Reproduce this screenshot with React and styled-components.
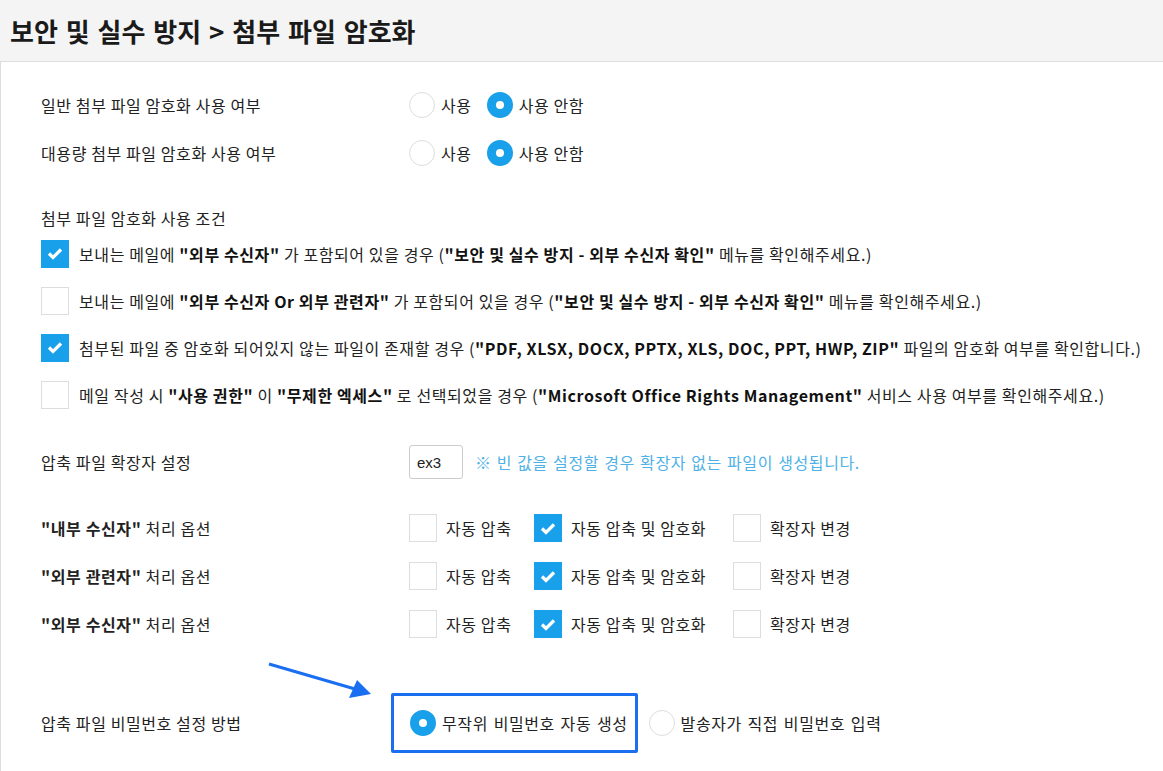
import React from "react";
import styled, { createGlobalStyle } from "styled-components";

const GlobalStyle = createGlobalStyle`
  html, body {
    margin: 0;
    padding: 0;
    background: #ffffff;
  }
  body {
    font-family: "Noto Sans CJK KR", "Noto Sans", sans-serif;
    color: #222222;
  }
`;

const CheckIcon = () => (
    <svg width="16" height="13" viewBox="0 0 16 13">
        <path d="M2 6.5 L6 10.5 L14 2.5" fill="none" stroke="#ffffff" strokeWidth="3.2" />
    </svg>
);

const Radio = ({ checked, label }) => (
    <RadioLabel>
        <RadioCircle checked={checked} />
        <span>{label}</span>
    </RadioLabel>
);

const Check = ({ checked, label }) => (
    <CheckLabel>
        <CheckBox checked={checked}>{checked && <CheckIcon />}</CheckBox>
        <span>{label}</span>
    </CheckLabel>
);

const conditions = [
    {
        checked: true,
        text: (
            <>
                보내는 메일에 <b>"외부 수신자"</b> 가 포함되어 있을 경우 (<b>"보안 및 실수 방지 - 외부 수신자 확인"</b> 메뉴를 확인해주세요.)
            </>
        ),
    },
    {
        checked: false,
        text: (
            <>
                보내는 메일에 <b>"외부 수신자 Or 외부 관련자"</b> 가 포함되어 있을 경우 (<b>"보안 및 실수 방지 - 외부 수신자 확인"</b> 메뉴를 확인해주세요.)
            </>
        ),
    },
    {
        checked: true,
        text: (
            <>
                첨부된 파일 중 암호화 되어있지 않는 파일이 존재할 경우 (<b>"PDF, XLSX, DOCX, PPTX, XLS, DOC, PPT, HWP, ZIP"</b> 파일의 암호화 여부를 확인합니다.)
            </>
        ),
    },
    {
        checked: false,
        text: (
            <>
                메일 작성 시 <b>"사용 권한"</b> 이 <b>"무제한 엑세스"</b> 로 선택되었을 경우 (<b>"Microsoft Office Rights Management"</b> 서비스 사용 여부를 확인해주세요.)
            </>
        ),
    },
];

const targets = ["내부 수신자", "외부 관련자", "외부 수신자"];

const App = () => {
    return (
        <Page>
            <GlobalStyle />
            <Header>
                <Title>보안 및 실수 방지 &gt; 첨부 파일 암호화</Title>
            </Header>
            <Panel>
                <Row>
                    <Label>일반 첨부 파일 암호화 사용 여부</Label>
                    <Controls>
                        <Radio label="사용" />
                        <Radio checked label="사용 안함" />
                    </Controls>
                </Row>
                <Row>
                    <Label>대용량 첨부 파일 암호화 사용 여부</Label>
                    <Controls>
                        <Radio label="사용" />
                        <Radio checked label="사용 안함" />
                    </Controls>
                </Row>

                <SectionTitle>첨부 파일 암호화 사용 조건</SectionTitle>
                {conditions.map((c, i) => (
                    <ConditionRow key={i}>
                        <CheckBox checked={c.checked}>{c.checked && <CheckIcon />}</CheckBox>
                        <ConditionText>{c.text}</ConditionText>
                    </ConditionRow>
                ))}

                <Row top={20}>
                    <Label>압축 파일 확장자 설정</Label>
                    <Controls>
                        <ExtInput defaultValue="ex3" />
                        <Hint>※ 빈 값을 설정할 경우 확장자 없는 파일이 생성됩니다.</Hint>
                    </Controls>
                </Row>

                <OptionGroup>
                    {targets.map((t) => (
                        <Row key={t}>
                            <Label>
                                <b>"{t}"</b> 처리 옵션
                            </Label>
                            <OptionControls>
                                <Check label="자동 압축" />
                                <Check checked label="자동 압축 및 암호화" />
                                <Check label="확장자 변경" />
                            </OptionControls>
                        </Row>
                    ))}
                </OptionGroup>

                <PasswordRow>
                    <Arrow width="110" height="40" viewBox="0 0 110 40">
                        <line x1="2" y1="2" x2="88" y2="27" stroke="#1a6ff0" strokeWidth="3" />
                        <polygon points="104,32 82,36 90,18" fill="#1a6ff0" />
                    </Arrow>
                    <Label>압축 파일 비밀번호 설정 방법</Label>
                    <Controls>
                        <Highlight>
                            <Radio checked label="무작위 비밀번호 자동 생성" />
                        </Highlight>
                        <Radio label="발송자가 직접 비밀번호 입력" />
                    </Controls>
                </PasswordRow>
            </Panel>
        </Page>
    );
};

export default App;

const Page = styled.div`
  width: 1163px;
  min-height: 771px;
  overflow: hidden;
`;

const Header = styled.div`
  height: 62px;
  background: #f4f4f4;
  border-bottom: 1px solid #dddddd;
  display: flex;
  align-items: center;
  padding-left: 10px;
  box-sizing: border-box;
`;

const Title = styled.h1`
  margin: 0;
  font-size: 26px;
  font-weight: 700;
  color: #1a1a1a;
  letter-spacing: 0;
  word-spacing: 2px;
`;

const Panel = styled.div`
  border-left: 1px solid #dddddd;
  padding: 19px 0 30px 40px;
  font-size: 16px;
  letter-spacing: 0.6px;
  min-height: 690px;
  box-sizing: border-box;
`;

const Row = styled.div`
  display: grid;
  grid-template-columns: 368px 1fr;
  align-items: center;
  height: 48px;
  margin-top: ${(p) => p.top || 0}px;
`;

const Label = styled.div`
  white-space: nowrap;
  color: #222222;
  b {
    font-weight: 700;
  }
`;

const Controls = styled.div`
  display: flex;
  align-items: center;
`;

const OptionControls = styled.div`
  display: grid;
  grid-template-columns: 125px 199px auto;
  align-items: center;
`;

const RadioLabel = styled.label`
  display: flex;
  align-items: center;
  gap: 6px;
  margin-right: 15px;
  white-space: nowrap;
`;

const RadioCircle = styled.span`
  width: 26px;
  height: 26px;
  border-radius: 50%;
  box-sizing: border-box;
  border: ${(p) => (p.checked ? "9px solid #19a0eb" : "1px solid #dddddd")};
  background: #ffffff;
  flex-shrink: 0;
`;

const CheckLabel = styled.label`
  display: flex;
  align-items: center;
  gap: 9px;
  white-space: nowrap;
`;

const CheckBox = styled.span`
  width: 28px;
  height: 28px;
  box-sizing: border-box;
  border: 1px solid ${(p) => (p.checked ? "#19a0eb" : "#dddddd")};
  background: ${(p) => (p.checked ? "#19a0eb" : "#ffffff")};
  display: flex;
  align-items: center;
  justify-content: center;
  flex-shrink: 0;
`;

const SectionTitle = styled.div`
  margin-top: 29px;
  height: 24px;
  line-height: 24px;
`;

const ConditionRow = styled.div`
  display: flex;
  align-items: center;
  gap: 10px;
  height: 47px;
`;

const ConditionText = styled.div`
  white-space: nowrap;
  b {
    font-weight: 700;
    color: #111111;
  }
`;

const ExtInput = styled.input`
  width: 54px;
  height: 34px;
  box-sizing: border-box;
  border: 1px solid #cccccc;
  border-radius: 3px;
  padding: 0 7px;
  font-family: "Liberation Sans", Arial, sans-serif;
  font-size: 15px;
  color: #222222;
  outline: none;
`;

const Hint = styled.span`
  margin-left: 12px;
  color: #4fb1e6;
  white-space: nowrap;
  word-spacing: 1px;
`;

const OptionGroup = styled.div`
  margin-top: 18px;
`;

const PasswordRow = styled(Row)`
  position: relative;
  height: 60px;
  margin-top: 45px;
`;

const Arrow = styled.svg`
  position: absolute;
  left: 226px;
  top: -31px;
`;

const Highlight = styled.div`
  display: flex;
  align-items: center;
  height: 60px;
  box-sizing: border-box;
  border: 3px solid #1a6ff0;
  border-radius: 2px;
  margin-left: -18px;
  padding: 0 3px 0 16px;
  margin-right: 11px;
  word-spacing: 1.5px;
  label {
    margin-right: 4px;
  }
  & + label {
    word-spacing: 1.5px;
  }
`;
